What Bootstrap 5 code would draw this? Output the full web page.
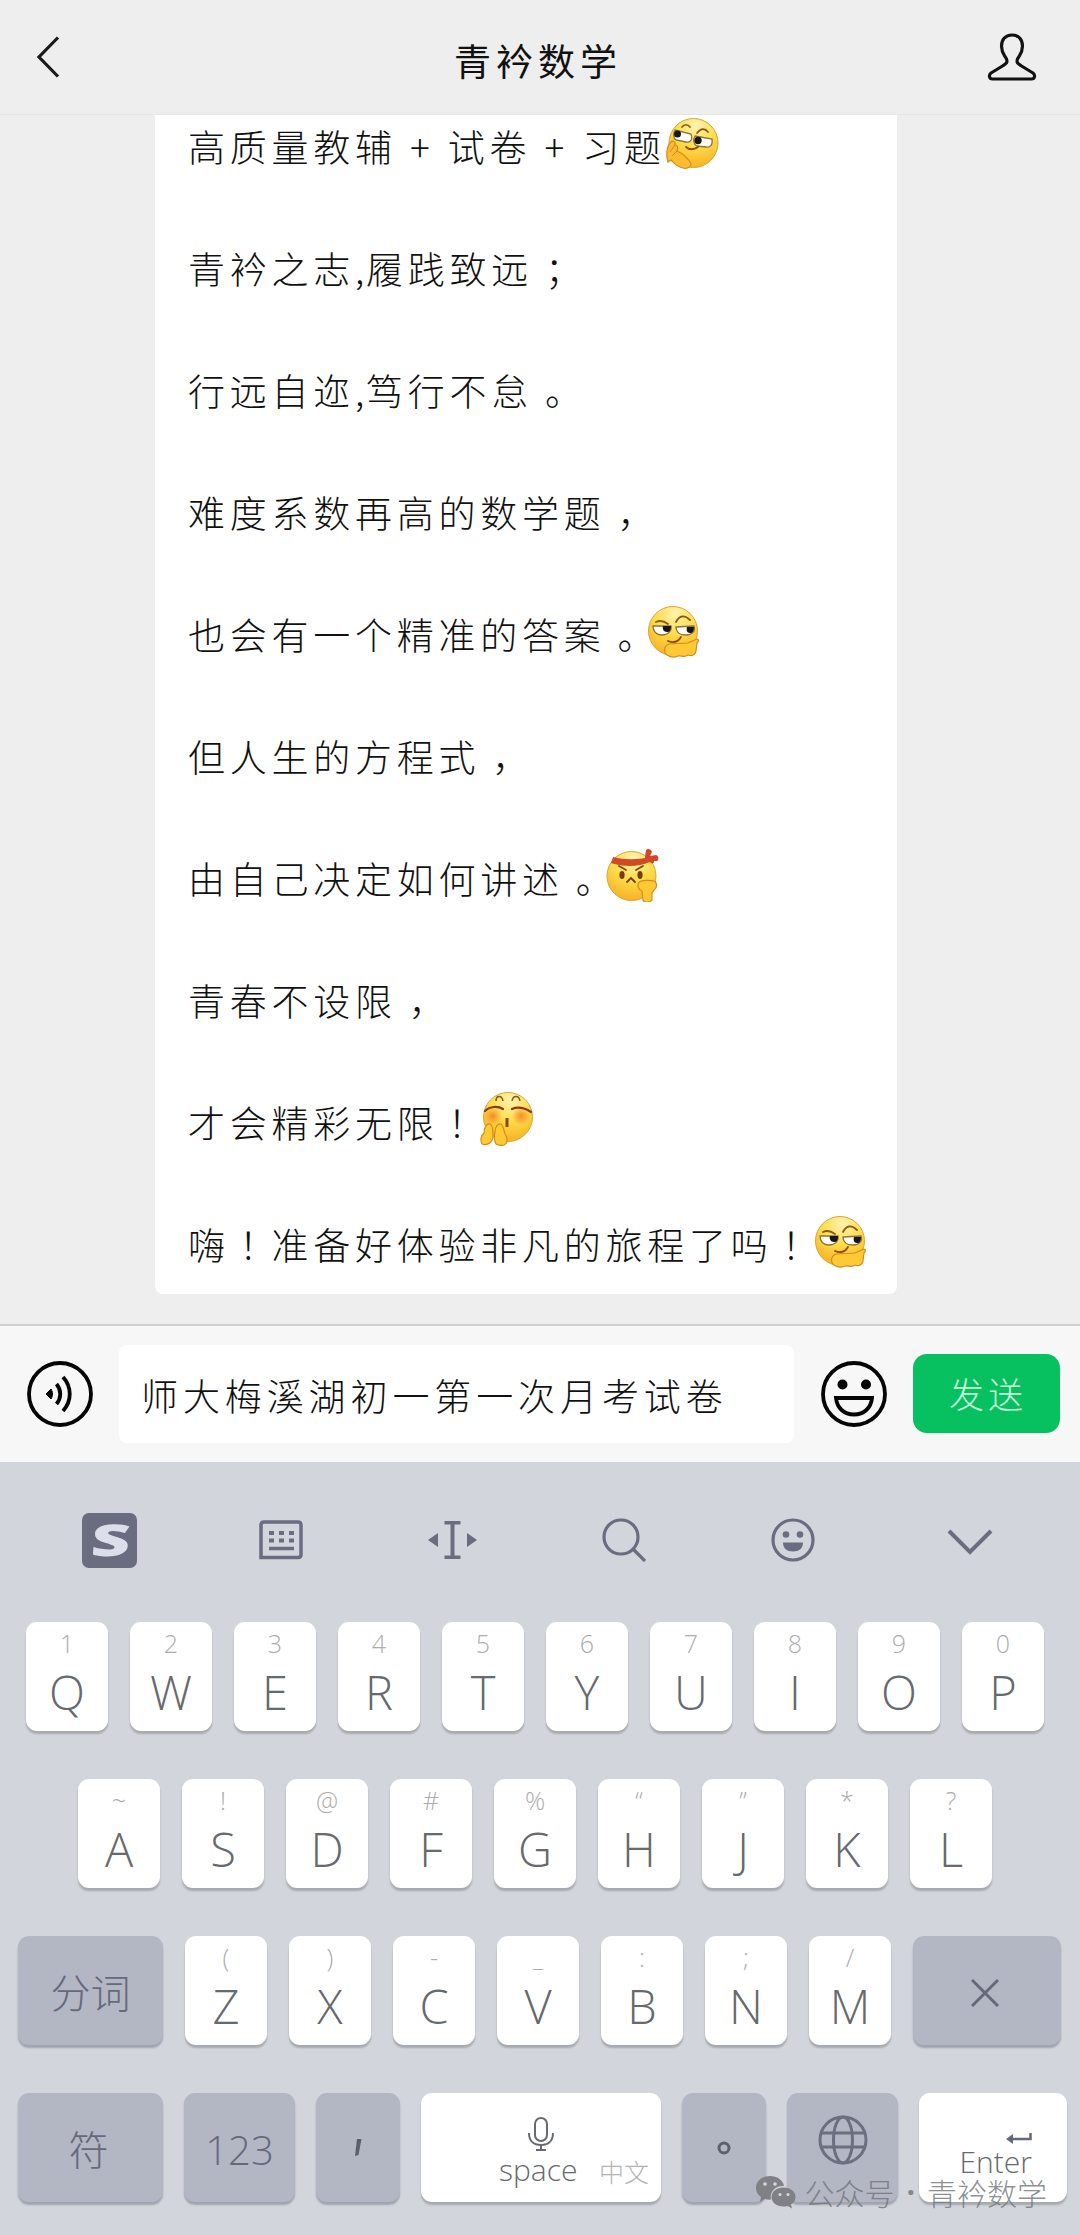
<!DOCTYPE html>
<html lang="zh-CN">
<head>
  <meta charset="UTF-8">
  <meta name="viewport" content="width=device-width, initial-scale=1">
  <title>青衿数学</title>
  <link href="https://cdn.jsdelivr.net/npm/bootstrap@5.3.0/dist/css/bootstrap.min.css" rel="stylesheet">
  <style>
    body {
      margin: 0;
      height: 2235px;
      background: #eeeeee;
      font-family: "Noto Sans CJK SC", sans-serif;
      font-weight: 300;
      color: #111;
      overflow: hidden;
    }

    svg {
      display: block;
      flex-shrink: 0;
    }

    .top-bar {
      height: 115px;
      padding: 0 43px 0 36px;
      border-bottom: 1px solid #e6e6e6;
      flex-shrink: 0;
    }

    .top-bar h1 {
      font-size: 37px;
      letter-spacing: 5px;
      font-weight: 400;
      line-height: 40px;
      padding: 5px 0 0 27px;
    }

    .messages {
      height: 1209px;
      padding: 0 183px 30px 155px;
      flex-shrink: 0;
    }

    .bubble {
      background: #fff;
      border-radius: 8px;
      padding-left: 33px;
      gap: 26px;
      font-size: 37px;
      letter-spacing: 4.75px;
    }

    .bubble p {
      height: 96px;
      padding-bottom: 2px;
      white-space: pre;
    }

    /* full-width punctuation sits in the middle of its cell */
    .pun {
      margin-left: 12px;
      margin-right: -12px;
    }

    .bang {
      font-family: "Noto Sans CJK TC", sans-serif;
    }

    .half {
      margin-right: -3px;
    }

    .plus {
      width: 51px;
      text-align: center;
    }

    .face {
      width: 54px;
      height: 54px;
      margin: -8px 0 0 -1px;
    }

    .input-bar {
      height: 138px;
      background: #f7f7f7;
      border-top: 2px solid #d2d2d2;
      padding: 0 20px 0 27px;
      flex-shrink: 0;
    }

    .draft {
      width: 675px;
      height: 98px;
      margin: 0 27px 0 26px;
      padding: 4px 0 0 22px;
      background: #fff;
      border-radius: 8px;
      font-size: 37px;
      letter-spacing: 4.9px;
      white-space: nowrap;
    }

    .send {
      width: 147px;
      height: 79px;
      margin: 0 0 2px 26px;
      padding: 0 0 0 3px;
      border-radius: 14px;
      background: #07c160;
      color: #c9f8dc;
      font-size: 35px;
      font-weight: 300;
      letter-spacing: 4px;
    }

    .send:hover {
      background: #06ad56;
      color: #c9f8dc;
    }

    .keyboard {
      height: 773px;
      background: #d2d6dc;
      color: #66696e;
      font-family: "Open Sans", "Noto Sans CJK SC", sans-serif;
    }

    .tools {
      height: 160px;
      padding: 0 87px 4px 82px;
      gap: 125px;
    }

    .tool-icon {
      color: #6a6c80;
    }

    .key-rows {
      gap: 48px;
    }

    .key-row {
      height: 109px;
      gap: 21px;
    }

    .pad-1 { padding-left: 26px; }
    .pad-2 { padding-left: 78px; }
    .pad-3 { padding-left: 18px; }

    .key {
      width: 82px;
      height: 109px;
      flex-shrink: 0;
      background: #fff;
      border-radius: 11px;
      box-shadow: 0 3px 2px #a6a9ae;
      font-size: 47px;
      line-height: 50px;
    }

    .key-row.letters { gap: 22px; }

    .key i {
      font-style: normal;
      font-size: 25px;
      line-height: 28px;
      height: 28px;
      margin: 7px 0 10px;
      color: #adadad;
    }

    .key-dark {
      background: #b3b6c3;
      box-shadow: 0 3px 2px #a0a3b0;
      font-size: 40px;
      color: #66697a;
    }

    .w-145 { width: 145px; }
    .w-148 { width: 148px; }
    .w-111 { width: 111px; }
    .w-84 { width: 84px; }
    .w-240 { width: 240px; }

    .key-word {
      font-size: 30px;
      line-height: 34px;
    }

    .space-word {
      padding-left: 78px;
    }

    .lang-mark {
      font-size: 25px;
      color: #b4b4b4;
    }

    .enter-key {
      padding: 0 35px 23px 0;
    }

    .watermark {
      right: 33px;
      bottom: 26px;
      font-size: 30px;
      line-height: 32px;
      color: rgba(112, 114, 118, .8);
    }
  </style>
</head>
<body class="d-flex flex-column position-relative">

  <!-- shared drawings -->
  <svg width="0" height="0" class="position-absolute">
    <defs>
      <radialGradient id="skin" cx=".55" cy=".15" r=".95">
        <stop offset="0" stop-color="#fff3b0"/>
        <stop offset=".45" stop-color="#ffdc4a"/>
        <stop offset="1" stop-color="#f5a81c"/>
      </radialGradient>
      <radialGradient id="blush">
        <stop offset="0" stop-color="#f4701c" stop-opacity=".75"/>
        <stop offset="1" stop-color="#f4701c" stop-opacity="0"/>
      </radialGradient>
      <symbol id="face-think" viewBox="0 0 54 54">
        <circle cx="27" cy="27" r="24.5" fill="url(#skin)" stroke="#d9a437"/>
        <path d="M7 22h18c1 5-3 9-9 9s-9-4-9-9z" fill="#fff" stroke="#8f7430" stroke-width="1.3"/>
        <path d="M30 23l18-1c2 5-2 9-8 9s-10-3-10-8z" fill="#fff" stroke="#8f7430" stroke-width="1.3"/>
        <path d="M17 22h8c0 4-1 6-4 6s-5-3-4-6zM41 23h7c0 4-1 6-4 6s-4-3-3-6z" fill="#161616"/>
        <path d="M10 18c4-2 8-1 12 2M30 18c3-6 8-8 14-2" fill="none" stroke="#8a5a12" stroke-width="1.8" stroke-linecap="round"/>
        <path d="M22 37c5 2 10 1 13-4" fill="none" stroke="#8a4a12" stroke-width="1.8" stroke-linecap="round"/>
        <path d="M21 51c-4-3-3-9 2-11l19-1 9-4c2 0 2 2 0 4l-1 8c-1 5-5 5-8 4-4 3-7 0-10 1-4 2-8 1-11-1z" fill="#ffc835" stroke="#d08d1e" stroke-width="1.2"/>
      </symbol>
      <symbol id="face-whisper" viewBox="0 0 54 54">
        <circle cx="28.5" cy="27" r="24.5" fill="url(#skin)" stroke="#d9a437"/>
        <path d="M10 14l16 4c2 6-1 9-5 8l-10-2c-3-2-3-7-1-10z" fill="#fff" stroke="#8f7430" stroke-width="1.3"/>
        <path d="M30 20l17 3c1 6-2 9-6 8l-9-1c-4-2-4-7-2-10z" fill="#fff" stroke="#8f7430" stroke-width="1.3"/>
        <circle cx="12.5" cy="18" r="3.5" fill="#161616"/>
        <circle cx="33" cy="24.5" r="3.7" fill="#161616"/>
        <path d="M17 11c2-3 6-3 8 0M32 17c4-5 8-5 11-1" fill="none" stroke="#8a5a12" stroke-width="1.7" stroke-linecap="round"/>
        <path d="M21 31c3 3 8 3 12 0" fill="none" stroke="#8a4a12" stroke-width="1.8" stroke-linecap="round"/>
        <path d="M3 46c-2-6-2-15 3-20 2-2 5 0 4 3 3 0 3 3 2 6 5 2 12 8 14 13 0 3-4 5-8 4-6-1-9-5-12-8z" fill="#fdbb32" stroke="#d08d1e" stroke-width="1.2"/>
        <path d="M10 29l-5 7M12 35l-5 5" stroke="#d08d1e" fill="none"/>
      </symbol>
      <symbol id="face-angry" viewBox="0 0 54 54">
        <circle cx="26.5" cy="28" r="24.5" fill="url(#skin)" stroke="#d9a437"/>
        <path d="M8 9c12 3 25 3 36 0l1 5c-12 5-26 5-39 1z" fill="#cf4a25"/>
        <path d="M40 9l1-7c2-2 5-1 6 2l-2 4 6-1c3 1 3 5 1 6l-3 0c0 3-2 3-4 1l-4-2z" fill="#d4452a"/>
        <path d="M14 18l7 4M38 18l-7 4" stroke="#7b4a12" stroke-width="1.8" stroke-linecap="round"/>
        <ellipse cx="17" cy="27" rx="2.6" ry="4" fill="#7a3b0c"/>
        <ellipse cx="35" cy="27" rx="2.6" ry="4" fill="#7a3b0c"/>
        <path d="M22 34l4-4 4 4" fill="none" stroke="#7a3b0c" stroke-width="1.8" stroke-linecap="round"/>
        <path d="M34 34c3-2 11-2 15-1 4 2 3 7 0 9l-2 3 0 7c-2 3-8 3-9 0l-1-9c-4-1-5-6-3-9z" fill="#ffc835" stroke="#d08d1e" stroke-width="1.2"/>
      </symbol>
      <symbol id="face-shy" viewBox="0 0 54 54">
        <circle cx="29" cy="25" r="24.5" fill="url(#skin)" stroke="#d9a437"/>
        <circle cx="14" cy="24" r="9" fill="url(#blush)"/>
        <circle cx="42" cy="24" r="9" fill="url(#blush)"/>
        <path d="M17 9c0-6 6-6 7 0M33 9c1-6 7-6 8 0" fill="none" stroke="#8a5a12" stroke-width="1.5"/>
        <path d="M6 19c5-5 13-5 18-2M33 17c7-3 13-1 19 3" fill="none" stroke="#8a3c10" stroke-width="2.2" stroke-linecap="round"/>
        <path d="M28 26v9" stroke="#8a4a12" stroke-width="3"/>
        <path d="M3 52c-2-4-1-9 2-11 0-6 3-10 6-9 3 1 3 8 3 12 0 6-5 10-11 8zM17 52c-2-3-2-9-1-12 0-5 3-9 6-8 2 1 3 6 4 10 3 4 3 9-1 11-3 1-6 0-8-1z" fill="#ffc835" stroke="#d08d1e" stroke-width="1.2"/>
      </symbol>
    </defs>
  </svg>

  <header class="top-bar d-flex align-items-center justify-content-between">
    <svg width="26" height="42" viewBox="0 0 26 42" fill="none" stroke="#1a1a1a" stroke-width="3.2"><path d="M22 1.5L3 21l19 19.5"/></svg>
    <h1 class="m-0">青衿数学</h1>
    <svg width="50" height="48" viewBox="0 0 50 48" fill="none" stroke="#111" stroke-width="3.2" stroke-linejoin="round"><path d="M25 2c-7 0-10.500 5-10.500 11 0 7 3 9 5 13 1.500 4-1 5-4 7L4 40c-2.500 2-2 6 1.500 6h39c3.500 0 4-4 1.500-6l-11.500-7c-3-2-5.500-3-4-7 2-4 5-6 5-13C35.500 7 32 2 25 2z"/></svg>
  </header>

  <main class="messages d-flex flex-column justify-content-end overflow-hidden">
    <div class="bubble d-flex flex-column">
      <p class="d-flex align-items-center m-0">高质量教辅<span class="plus">+</span>试卷<span class="plus">+</span>习题<svg class="face"><use href="#face-whisper"/></svg></p>
      <p class="d-flex align-items-center m-0">青衿之志<span class="half">,</span>履践致远<span class="pun">；</span></p>
      <p class="d-flex align-items-center m-0">行远自迩<span class="half">,</span>笃行不怠<span class="pun">。</span></p>
      <p class="d-flex align-items-center m-0">难度系数再高的数学题<span class="pun">，</span></p>
      <p class="d-flex align-items-center m-0">也会有一个精准的答案<span class="pun">。</span><svg class="face"><use href="#face-think"/></svg></p>
      <p class="d-flex align-items-center m-0">但人生的方程式<span class="pun">，</span></p>
      <p class="d-flex align-items-center m-0">由自己决定如何讲述<span class="pun">。</span><svg class="face"><use href="#face-angry"/></svg></p>
      <p class="d-flex align-items-center m-0">青春不设限<span class="pun">，</span></p>
      <p class="d-flex align-items-center m-0">才会精彩无限<span class="bang">！</span><svg class="face"><use href="#face-shy"/></svg></p>
      <p class="d-flex align-items-center m-0">嗨<span class="bang">！</span>准备好体验非凡的旅程了吗<span class="bang">！</span><svg class="face"><use href="#face-think"/></svg></p>
    </div>
  </main>

  <section class="input-bar d-flex align-items-center">
    <svg width="66" height="66" viewBox="0 0 66 66" fill="none" stroke="#050505" stroke-width="3.8">
      <circle cx="33" cy="33" r="31"/>
      <path d="M19 33l5-5c2 3 2 7 0 10z" fill="#050505" stroke-width="1"/>
      <path d="M29.500 23c5 6 5 14 0 20M36 16c9 10 9 24 0 34"/>
    </svg>
    <div class="draft d-flex align-items-center">师大梅溪湖初一第一次月考试卷</div>
    <svg width="66" height="66" viewBox="0 0 66 66" fill="none" stroke="#050505" stroke-width="3.8">
      <circle cx="33" cy="33" r="31"/>
      <circle cx="21.500" cy="23.500" r="5" fill="#050505" stroke="none"/>
      <circle cx="45" cy="23.500" r="5" fill="#050505" stroke="none"/>
      <path d="M15 37h36c-1 10-8 16.500-18 16.500S16 47 15 37z"/>
    </svg>
    <button type="button" class="send btn">发送</button>
  </section>

  <section class="keyboard">
    <div class="tools d-flex align-items-center">
      <svg class="tool-icon" width="55" height="55" viewBox="0 0 55 55">
        <rect width="55" height="55" rx="7" fill="currentColor"/>
        <text transform="translate(27.5 43) skewX(-5) scale(1.55 1)" text-anchor="middle" font-family="Open Sans" font-weight="800" font-size="44" fill="#dcdfea">S</text>
      </svg>
      <svg class="tool-icon" style="margin-left:-3px" width="44" height="40" viewBox="0 0 44 40" fill="none" stroke="currentColor">
        <path d="M2 37.500V5q0-3 3-3h34q3 0 3 3v29.500q0 3-3 3z" stroke-width="3.500"/>
        <path d="M10 13h5m5 0h5m5 0h5M10 20.500h5m5 0h5m5 0h5" stroke-width="4"/>
        <path d="M10 28.500h25" stroke-width="3.500"/>
      </svg>
      <svg class="tool-icon" width="49" height="38" viewBox="0 0 49 38" fill="currentColor">
        <path d="M0 19l10-7v14zM49 19l-10-7v14zM16.500 0h16v3.500h-6v31h6V38h-16v-3.500h6v-31h-6z"/>
      </svg>
      <svg class="tool-icon" width="44" height="44" viewBox="0 0 44 44" fill="none" stroke="currentColor" stroke-width="3.2">
        <circle cx="19" cy="19" r="17"/><path d="M31 31l12 12"/>
      </svg>
      <svg class="tool-icon" width="44" height="44" viewBox="0 0 44 44" fill="none" stroke="currentColor" stroke-width="3.2">
        <circle cx="22" cy="22" r="20"/>
        <circle cx="15" cy="16.500" r="3.300" fill="currentColor" stroke="none"/>
        <circle cx="29" cy="16.500" r="3.300" fill="currentColor" stroke="none"/>
        <path d="M12 24.500h20c0 6-4 9-10 9s-10-3-10-9z" fill="currentColor" stroke="none"/>
      </svg>
      <svg class="tool-icon ms-auto mt-1" width="46" height="26" viewBox="0 0 46 26" fill="none" stroke="currentColor" stroke-width="4"><path d="M2 2l21 21L44 2"/></svg>
    </div>

    <div class="key-rows d-flex flex-column">
      <div class="key-row letters pad-1 d-flex">
        <div class="key d-flex flex-column align-items-center"><i>1</i>Q</div>
        <div class="key d-flex flex-column align-items-center"><i>2</i>W</div>
        <div class="key d-flex flex-column align-items-center"><i>3</i>E</div>
        <div class="key d-flex flex-column align-items-center"><i>4</i>R</div>
        <div class="key d-flex flex-column align-items-center"><i>5</i>T</div>
        <div class="key d-flex flex-column align-items-center"><i>6</i>Y</div>
        <div class="key d-flex flex-column align-items-center"><i>7</i>U</div>
        <div class="key d-flex flex-column align-items-center"><i>8</i>I</div>
        <div class="key d-flex flex-column align-items-center"><i>9</i>O</div>
        <div class="key d-flex flex-column align-items-center"><i>0</i>P</div>
      </div>
      <div class="key-row letters pad-2 d-flex">
        <div class="key d-flex flex-column align-items-center"><i>~</i>A</div>
        <div class="key d-flex flex-column align-items-center"><i>!</i>S</div>
        <div class="key d-flex flex-column align-items-center"><i>@</i>D</div>
        <div class="key d-flex flex-column align-items-center"><i>#</i>F</div>
        <div class="key d-flex flex-column align-items-center"><i>%</i>G</div>
        <div class="key d-flex flex-column align-items-center"><i>“</i>H</div>
        <div class="key d-flex flex-column align-items-center"><i>”</i>J</div>
        <div class="key d-flex flex-column align-items-center"><i>*</i>K</div>
        <div class="key d-flex flex-column align-items-center"><i>?</i>L</div>
      </div>
      <div class="key-row letters pad-3 d-flex">
        <div class="key key-dark w-145 d-flex align-items-center justify-content-center pt-1">分词</div>
        <div class="key d-flex flex-column align-items-center"><i>(</i>Z</div>
        <div class="key d-flex flex-column align-items-center"><i>)</i>X</div>
        <div class="key d-flex flex-column align-items-center"><i>-</i>C</div>
        <div class="key d-flex flex-column align-items-center"><i>_</i>V</div>
        <div class="key d-flex flex-column align-items-center"><i>:</i>B</div>
        <div class="key d-flex flex-column align-items-center"><i>;</i>N</div>
        <div class="key d-flex flex-column align-items-center"><i>/</i>M</div>
        <div class="key key-dark w-148 d-flex align-items-center justify-content-center pt-1 pe-1">
          <svg width="28" height="28" viewBox="0 0 28 28" stroke="#66697a" stroke-width="3"><path d="M1 1l26 26M27 1L1 27"/></svg>
        </div>
      </div>
      <div class="key-row pad-3 d-flex">
        <div class="key key-dark w-145 d-flex align-items-center justify-content-center pt-1 pe-1">符</div>
        <div class="key key-dark w-111 d-flex align-items-center justify-content-center pt-1">123</div>
        <div class="key key-dark w-84 d-flex align-items-center justify-content-center">
          <svg width="8" height="18" viewBox="0 0 8 18" fill="#5c5f6c"><path d="M3 0h4.500L4.500 16 1 17z"/></svg>
        </div>
        <div class="key w-240 d-flex flex-column align-items-center pt-4">
          <svg width="28" height="34" viewBox="0 0 28 34" fill="none" stroke="#66696e" stroke-width="2">
            <rect x="8" y="1" width="12" height="23" rx="6"/>
            <path d="M2 16c0 8 5 12 12 12s12-4 12-12M14 28v4M9 33h10"/>
          </svg>
          <div class="w-100 d-flex align-items-center key-word">
            <span class="space-word me-auto">space</span><span class="lang-mark pt-1 pe-2 me-1">中文</span>
          </div>
        </div>
        <div class="key key-dark w-84 d-flex align-items-center justify-content-center">
          <svg width="14" height="14" viewBox="0 0 14 14" fill="none" stroke="#5c5f6c" stroke-width="3"><circle cx="7" cy="7" r="5"/></svg>
        </div>
        <div class="key key-dark w-111 d-flex align-items-center justify-content-center pb-3">
          <svg width="50" height="50" viewBox="0 0 50 50" fill="none" stroke="#6c6f80" stroke-width="3">
            <circle cx="25" cy="25" r="23"/><ellipse cx="25" cy="25" rx="9.500" ry="23"/><path d="M3 18h44M3 32h44"/>
          </svg>
        </div>
        <div class="key enter-key w-148 d-flex flex-column align-items-end justify-content-end">
          <svg width="26" height="12" viewBox="0 0 26 12" fill="none" stroke="#66697a" stroke-width="2.500"><path d="M24.500 0v6H5"/><path d="M0 6l7-5v10z" fill="#66697a" stroke="none"/></svg>
          <span class="key-word">Enter</span>
        </div>
      </div>
    </div>
  </section>

  <div class="watermark d-flex align-items-center position-absolute">
    <svg class="me-2" width="41" height="34" viewBox="0 0 41 34" fill="#7f8186">
      <path d="M15 1C7 1 1 6 1 13c0 4 2 7 5 9l-1 5 5-3c2 .6 4 .8 6 .6C14 16 22 10 29 11 28 5 22 1 15 1z"/>
      <path d="M28.500 12.500c-7 0-12 4-12 9.500s5 9.500 12 9.500c1.500 0 3 0 4-.5l4.500 2.500-1-4c3-2 4.500-4.500 4.500-7.500 0-5.500-5-9.500-12-9.500z"/>
      <g fill="#d5d8de"><circle cx="10" cy="9" r="1.800"/><circle cx="20" cy="9" r="1.800"/><circle cx="25" cy="19.500" r="1.500"/><circle cx="33" cy="19.500" r="1.500"/></g>
    </svg>
    <span>公众号</span><span class="px-2 mx-1 fw-bold" style="font-family:'Open Sans'">·</span><span>青衿数学</span>
  </div>

  <script src="https://cdn.jsdelivr.net/npm/bootstrap@5.3.0/dist/js/bootstrap.bundle.min.js"></script>
</body>
</html>
